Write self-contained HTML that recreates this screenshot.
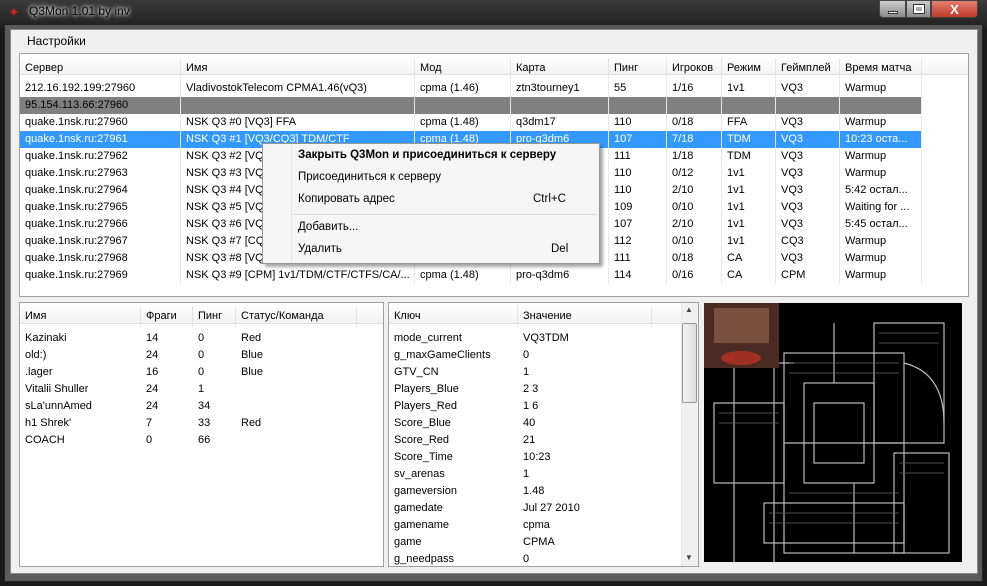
<!DOCTYPE html>
<html><head><meta charset="utf-8"><style>
*{margin:0;padding:0;box-sizing:border-box}
body{width:987px;height:586px;overflow:hidden;background:#1a1a1a;font-family:"Liberation Sans","DejaVu Sans",sans-serif;font-size:11px;color:#000;position:relative}
.abs{position:absolute}
.tb{left:0;top:0;width:987px;height:28px;background:linear-gradient(#3a3a3a,#202020)}
.frame{left:4px;top:24px;width:979px;height:558px;background:#5a5a5a;border:1px solid #222}
.client{left:10px;top:29px;width:968px;height:545px;background:#f0f0f0;border:1px solid #888}
.box{background:#fff;border:1px solid #a0a0a0;overflow:hidden}
.hdr{position:absolute;left:0;top:0;height:21px;background:linear-gradient(#fff,#f3f3f3);border-bottom:1px solid #e0e0e0;width:100%}
.c{position:absolute;white-space:nowrap;overflow:hidden;height:17px;line-height:17px;padding-left:5px}
.hc{position:absolute;top:3px;height:21px;line-height:21px;padding-left:5px;border-right:1px solid #e3e3e3;white-space:nowrap}
.row{position:absolute;left:0;height:17px;width:902px}
.sel{background:#3399ff;color:#fff}
.gray{background:#808080}
.row .c{border-right:1px solid #e8e8e8}
.menu{left:262px;top:143px;width:338px;height:121px;background:#f5f5f5;border:1px solid #979797;box-shadow:3px 3px 3px rgba(0,0,0,.35)}
.mi{position:absolute;left:35px;font-size:11.5px}
</style></head><body>
<div class="abs tb"></div>
<div class="abs frame"></div>
<div class="abs" style="left:8px;top:5px;width:14px;height:14px;color:#c22;font-size:14px;line-height:14px">✦</div>
<div class="abs" style="left:29px;top:4px;color:#000;font-size:12px;text-shadow:0 0 6px #fff,0 0 3px #fff">Q3Mon 1.01 by inv</div>
<div class="abs" style="left:879px;top:0;width:27px;height:18px;background:linear-gradient(#ccc,#8a8a8a);border:1px solid #444;border-radius:0 0 0 4px"><div class="abs" style="left:8px;top:10px;width:10px;height:3px;background:#fff;border:1px solid #333"></div></div>
<div class="abs" style="left:906px;top:0;width:25px;height:18px;background:linear-gradient(#ccc,#8a8a8a);border:1px solid #444"><div class="abs" style="left:7px;top:4px;width:10px;height:8px;border:2px solid #fff;outline:1px solid #333"></div></div>
<div class="abs" style="left:931px;top:0;width:47px;height:18px;background:linear-gradient(#e08070,#c0392b);border:1px solid #444;border-radius:0 0 4px 0;color:#fff;font-weight:bold;text-align:center;font-size:13px;line-height:17px">X</div>
<div class="abs client"></div>
<div class="abs" style="left:27px;top:34px;font-size:12px">Настройки</div>

<div class="abs box" style="left:19px;top:53px;width:950px;height:244px">
 <div class="hdr"></div>
 <div class="hc" style="left:0;width:161px;top:4px">Сервер</div>
 <div class="hc" style="left:161px;width:234px;top:4px">Имя</div>
 <div class="hc" style="left:395px;width:96px;top:4px">Мод</div>
 <div class="hc" style="left:491px;width:98px;top:4px">Карта</div>
 <div class="hc" style="left:589px;width:58px;top:4px">Пинг</div>
 <div class="hc" style="left:647px;width:55px;top:4px">Игроков</div>
 <div class="hc" style="left:702px;width:54px;top:4px">Режим</div>
 <div class="hc" style="left:756px;width:64px;top:4px">Геймплей</div>
 <div class="hc" style="left:820px;width:82px;top:4px">Время матча</div>
 <div id="rows"></div>
</div>

<div class="abs menu">
 <div class="abs" style="left:28px;top:1px;width:1px;height:117px;background:#e2e2e2"></div>
 <div class="mi" style="top:5px;font-weight:bold">Закрыть Q3Mon и присоединиться к серверу</div>
 <div class="mi" style="top:27px">Присоединиться к серверу</div>
 <div class="mi" style="top:49px">Копировать адрес</div>
 <div class="mi" style="top:49px;left:270px">Ctrl+C</div>
 <div class="abs" style="left:30px;top:70px;width:304px;height:1px;background:#d7d7d7"></div>
 <div class="mi" style="top:77px">Добавить...</div>
 <div class="mi" style="top:99px">Удалить</div>
 <div class="mi" style="top:99px;left:288px">Del</div>
</div>

<div class="abs box" style="left:19px;top:302px;width:365px;height:265px">
 <div class="hdr"></div>
 <div class="hc" style="left:0;width:121px">Имя</div>
 <div class="hc" style="left:121px;width:52px">Фраги</div>
 <div class="hc" style="left:173px;width:43px">Пинг</div>
 <div class="hc" style="left:216px;width:121px">Статус/Команда</div>
 <div id="pl"></div>
</div>
<div class="abs box" style="left:388px;top:302px;width:311px;height:265px">
 <div class="hdr"></div>
 <div class="hc" style="left:0;width:129px">Ключ</div>
 <div class="hc" style="left:129px;width:134px">Значение</div>
 <div class="abs" style="left:292px;top:0;width:17px;height:263px;background:#f0f0f0;border-left:1px solid #e5e5e5"></div>
 <div class="abs" style="left:293px;top:20px;width:15px;height:80px;background:linear-gradient(90deg,#f4f4f4,#dcdcdc);border:1px solid #999;border-radius:2px"></div>
 <div class="abs" style="left:296px;top:2px;font-size:8px;color:#444">▲</div>
 <div class="abs" style="left:296px;top:250px;font-size:8px;color:#444">▼</div>
 <div id="kv"></div>
</div>
<div class="abs" style="left:704px;top:303px;width:258px;height:259px;background:#000">
 <svg width="258" height="259" style="position:absolute;left:0;top:0">
  <g fill="none" stroke="#bbb" stroke-width="1.2">
   <rect x="30" y="20" width="40" height="240"/><rect x="80" y="50" width="120" height="200"/>
   <rect x="100" y="80" width="70" height="100"/><rect x="110" y="100" width="50" height="60"/>
   <rect x="170" y="20" width="70" height="120"/><rect x="10" y="100" width="70" height="80"/>
   <rect x="190" y="150" width="55" height="100"/><rect x="60" y="200" width="140" height="40"/>
   <path d="M130 20 v60 M40 60 h50 M80 140 h120 M150 180 v70 M200 60 q40 10 40 60"/>
  </g>
  <g stroke="#666" stroke-width="0.7" fill="none">
   <path d="M35 30 h30 M35 40 h30 M35 50 h30 M85 60 h110 M85 70 h110 M85 190 h110 M175 30 h60 M175 40 h60 M15 110 h60 M15 120 h60 M195 160 h45 M195 170 h45 M65 210 h130 M65 220 h130"/>
  </g>
  <rect x="0" y="0" width="75" height="65" fill="#4a2a22"/>
  <rect x="10" y="5" width="55" height="35" fill="#7a5040"/>
  <ellipse cx="37" cy="55" rx="20" ry="7" fill="#a03020"/>
 </svg>
</div>

<script>
var R=[
["212.16.192.199:27960","VladivostokTelecom CPMA1.46(vQ3)","cpma (1.46)","ztn3tourney1","55","1/16","1v1","VQ3","Warmup"],
["95.154.113.66:27960","","","","","","","",""],
["quake.1nsk.ru:27960","NSK Q3 #0 [VQ3] FFA","cpma (1.48)","q3dm17","110","0/18","FFA","VQ3","Warmup"],
["quake.1nsk.ru:27961","NSK Q3 #1 [VQ3/CQ3] TDM/CTF","cpma (1.48)","pro-q3dm6","107","7/18","TDM","VQ3","10:23 оста..."],
["quake.1nsk.ru:27962","NSK Q3 #2 [VQ3","","","111","1/18","TDM","VQ3","Warmup"],
["quake.1nsk.ru:27963","NSK Q3 #3 [VQ","","","110","0/12","1v1","VQ3","Warmup"],
["quake.1nsk.ru:27964","NSK Q3 #4 [VQ","","","110","2/10","1v1","VQ3","5:42 остал..."],
["quake.1nsk.ru:27965","NSK Q3 #5 [VQ","","","109","0/10","1v1","VQ3","Waiting for ..."],
["quake.1nsk.ru:27966","NSK Q3 #6 [VQ","","","107","2/10","1v1","VQ3","5:45 остал..."],
["quake.1nsk.ru:27967","NSK Q3 #7 [CQ","","","112","0/10","1v1","CQ3","Warmup"],
["quake.1nsk.ru:27968","NSK Q3 #8 [VQ","","","111","0/18","CA","VQ3","Warmup"],
["quake.1nsk.ru:27969","NSK Q3 #9 [CPM]  1v1/TDM/CTF/CTFS/CA/...","cpma (1.48)","pro-q3dm6","114","0/16","CA","CPM","Warmup"]];
var X=[0,161,395,491,589,647,702,756,820,902],h="";
R.forEach(function(r,i){var cl=i==1?"row gray":i==3?"row sel":"row";h+='<div class="'+cl+'" style="top:'+(26+i*17)+'px">';
r.forEach(function(t,j){h+='<div class="c" style="left:'+X[j]+'px;width:'+(X[j+1]-X[j])+'px">'+t+'</div>'});h+='</div>'});
document.getElementById("rows").innerHTML=h;
var P=[["Kazinaki","14","0","Red"],["old:)","24","0","Blue"],[".lager","16","0","Blue"],["Vitalii Shuller","24","1",""],["sLa'unnAmed","24","34",""],["h1 Shrek'","7","33","Red"],["COACH","0","66",""]];
var PX=[0,121,173,216];h="";
P.forEach(function(r,i){r.forEach(function(t,j){h+='<div class="c" style="top:'+(27+i*17)+'px;left:'+PX[j]+'px">'+t+'</div>'})});
document.getElementById("pl").innerHTML=h;
var K=[["mode_current","VQ3TDM"],["g_maxGameClients","0"],["GTV_CN","1"],["Players_Blue","2 3"],["Players_Red","1 6"],["Score_Blue","40"],["Score_Red","21"],["Score_Time","10:23"],["sv_arenas","1"],["gameversion","1.48"],["gamedate","Jul 27 2010"],["gamename","cpma"],["game","CPMA"],["g_needpass","0"]];
h="";K.forEach(function(r,i){h+='<div class="c" style="top:'+(27+i*17)+'px;left:0">'+r[0]+'</div><div class="c" style="top:'+(27+i*17)+'px;left:129px">'+r[1]+'</div>'});
document.getElementById("kv").innerHTML=h;
</script>
</body></html>
